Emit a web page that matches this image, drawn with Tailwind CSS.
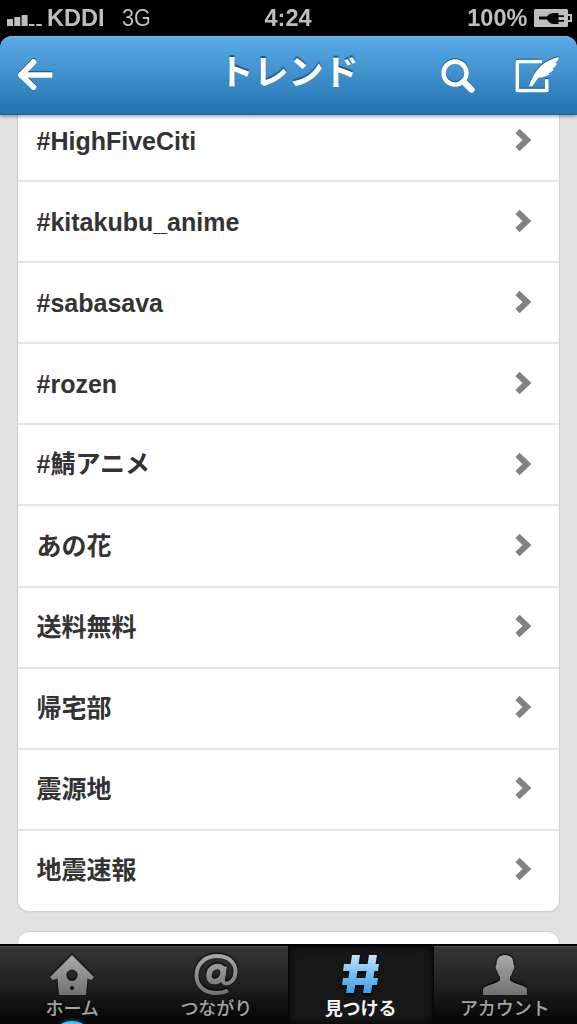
<!DOCTYPE html>
<html lang="ja">
<head>
<meta charset="utf-8">
<title>トレンド</title>
<script src="https://cdn.jsdelivr.net/npm/@tailwindcss/browser@4"></script>
</head>
<body class="bg-black">
<div class="flex h-[1024px] w-[577px] flex-col overflow-hidden bg-black font-['Liberation_Sans','Noto_Sans_CJK_JP',sans-serif]">

  <div class="grid h-9 shrink-0 grid-cols-3 items-center text-[24px] leading-9 text-[#bebebe]">
    <div class="flex items-center pl-[7px]">
      <svg class="h-4 w-[35px]" viewBox="0 0 35 16" fill="#bebebe"><path d="M0 9h6v7H0zM7.300 7h6v9h-6zM14.600 5h6v11h-6zM22 14h5.500v2H22zM29.300 14h5.500v2h-5.500z"/></svg>
      <span class="ml-[5px] w-[58px] font-bold"><span class="inline-block origin-left scale-x-[.98]">KDDI</span></span>
      <span class="ml-[17px] inline-block origin-left scale-x-[.9]">3G</span>
    </div>
    <div class="text-center font-bold"><span class="inline-block scale-x-[.98]">4:24</span></div>
    <div class="flex items-center justify-end pr-[5px]">
      <span class="mr-[7px] inline-block origin-right scale-x-[.98] font-bold">100%</span>
      <svg class="h-[18px] w-[38px]" viewBox="0 0 38 18"><rect width="34" height="18" rx="1.500" fill="#bebebe"/><path d="M34 6h3v6h-3" fill="none" stroke="#bebebe" stroke-width="2"/><path d="M5 7.500h8c2-3 4-3.500 7-3.500h4.500v2.200H30V8h-5.500v3H30v1.800h-5.500V15H20c-3 0-5-1-7-4.500H5z" fill="#080808"/></svg>
    </div>
  </div>

  <header class="z-10 flex h-[79px] shrink-0 items-center rounded-t-[12px] border-b border-[#1f6499] bg-linear-to-b from-[#59ace7] to-[#2373b2] shadow-[0_1px_4px_rgba(0,0,0,.45),inset_0_1px_0_#75b8e9]">
    <div class="w-[144px] pl-[17px]">
      <svg class="h-[36px] w-[38px] drop-shadow-[0_-1px_0_#1d4f78]" viewBox="0 0 38 36" fill="none" stroke="#fff" stroke-width="5.700" stroke-linecap="round" stroke-linejoin="round"><path d="M16.500 5 4 18l12.500 12" /><path d="M5 18h27.500" stroke-linecap="square"/></svg>
    </div>
    <h1 class="flex-1 pb-[5px] text-center text-[35px] leading-[40px] font-bold text-white [text-shadow:0_-2px_1px_#24587f]">トレンド</h1>
    <div class="flex w-[144px] items-center">
      <svg class="h-[40px] w-[44px] drop-shadow-[0_-1px_0_#1d4f78]" viewBox="0 0 44 40" fill="none" stroke="#fff"><circle cx="22" cy="18" r="11.500" stroke-width="4.500"/><path d="m30.500 26.500 8 8" stroke-width="6.500" stroke-linecap="round"/></svg>
      <svg class="ml-[36px] h-[40px] w-[46px] drop-shadow-[0_-1px_0_#1d4f78]" viewBox="0 0 46 40"><path d="M29 6.500H4.300v29h29.500V24" fill="none" stroke="#fff" stroke-width="3.500" stroke-linejoin="round"/><path d="M16 31C19.500 21.500 25 7 45.500 2c0 3-1 4.500-3 6l1.500.5c-1 2.500-2.500 3.500-4.500 5l1.500.5c-1.500 2.500-3.500 3.500-5.500 4.500l1 .7c-3.500 2.500-7 3.300-10.500 3.300-3 2-4 6.500-7.500 9z" fill="#fff"/></svg>
    </div>
  </header>

  <main class="flex min-h-0 flex-1 flex-col gap-[21px] overflow-hidden bg-[#e2e2e2] px-[18px]">
    <ul id="trends" class="-mt-[16px] shrink-0 rounded-[11px] bg-white pb-px text-[25px] leading-[37px] font-bold text-[#333] shadow-[0_0_0_1px_#d2d2d2,0_1px_2px_#c4c4c4]"></ul>
    <div class="h-[80px] shrink-0 rounded-[11px] bg-white shadow-[0_0_0_1px_#d2d2d2]"></div>
  </main>

  <nav class="grid h-[80px] shrink-0 grid-cols-4 border-t-2 border-black bg-linear-to-b from-[#373737] via-[#202020] to-[#050505] text-[18px] leading-[24px] font-medium text-[#a3a3a3] shadow-[inset_0_1px_0_#515151]">
    <a class="relative flex flex-col items-center overflow-hidden pt-[7px]">
      <svg class="h-[43px] w-[46px] drop-shadow-[0_-1px_1px_#000]" viewBox="0 0 46 43"><defs><linearGradient id="g" x2="0" y2="1"><stop stop-color="#aaa"/><stop offset="1" stop-color="#717171"/></linearGradient></defs><path fill="url(#g)" fill-rule="evenodd" d="m23 2 22 22-2.500 3-4-1.500L37 42H10L8.500 25.500l-5 1.500L1 24zm0 14.500a5.700 5.700 0 1 0 0 11.400 5.700 5.700 0 0 0 0-11.400zm0 16.500a2 2 0 1 0 0 4 2 2 0 0 0 0-4z"/></svg>
      <span class="mt-px whitespace-nowrap">ホーム</span>
      <i class="absolute -bottom-[9px] h-[12px] w-[24px] rounded-[50%] bg-[#52bdf0] shadow-[0_0_4px_#258cc4]"></i>
    </a>
    <a class="flex flex-col items-center pt-[7px]">
      <svg class="h-[43px] w-[46px] drop-shadow-[0_-1px_1px_#000]" viewBox="0 0 46 43" fill="none" stroke="url(#at)"><defs><linearGradient id="at" x1="0" x2="0" y1="1" y2="42" gradientUnits="userSpaceOnUse"><stop stop-color="#aaa"/><stop offset="1" stop-color="#717171"/></linearGradient></defs><path stroke-width="4" d="M35 37.500C31 39.500 27.500 40 23 40 10.500 40 3.500 32 3.500 22.500 3.500 11 12 3 24 3c11 0 18.500 6 18.500 15.500 0 7-4.500 12-9 12-3 0-4-2-3.500-5l2-12"/><path stroke-width="5.500" d="M30 19.500c0-4-2-6-5.500-6-5 0-8.500 4-8.500 9 0 4 2 6 5.500 6 5 0 8.500-4 8.500-9z"/></svg>
      <span class="mt-px whitespace-nowrap">つながり</span>
    </a>
    <a class="flex flex-col items-center bg-[#171717] pt-[7px] text-[#f4f4f4] shadow-[inset_0_0_9px_#000,-1px_0_0_#050505,1px_0_0_#050505]">
      <svg class="h-[43px] w-[44px] drop-shadow-[0_2px_1px_#000]" viewBox="0 0 44 43"><defs><linearGradient id="b" x2="0" y1="2" y2="41" gradientUnits="userSpaceOnUse"><stop stop-color="#c2e3fa"/><stop offset=".5" stop-color="#75bff2"/><stop offset="1" stop-color="#3d9be5"/></linearGradient></defs><g fill="url(#b)"><path d="M13 2h8l-6 38H7zM30 2h8l-6 38h-8zM5 11h35l-1 7H4zM4 25h35l-1 7H3z"/></g></svg>
      <span class="mt-px whitespace-nowrap font-bold">見つける</span>
    </a>
    <a class="flex flex-col items-center pt-[7px]">
      <svg class="h-[43px] w-[46px] drop-shadow-[0_-1px_1px_#000]" viewBox="0 0 46 43"><path fill="url(#g)" d="M23 2c6 0 8.500 3.500 8.500 9.500 1.500 1 .8 5-.8 6.500-.7 3-1.500 4.500-2.700 6v3c2 4 16 5 17 9v6H1v-6c1-4 15-5 17-9v-3c-1.200-1.500-2-3-2.700-6-1.600-1.500-2.300-5.500-.8-6.500C14.500 5.500 17 2 23 2z"/></svg>
      <span class="mt-px whitespace-nowrap">アカウント</span>
    </a>
  </nav>
</div>
<script>
const topics = ['#HighFiveCiti', '#kitakubu_anime', '#sabasava', '#rozen', '#鯖アニメ', 'あの花', '送料無料', '帰宅部', '震源地', '地震速報'];
document.getElementById('trends').innerHTML = topics.map(t => `
<li class="flex h-[81.1px] items-center justify-between border-t-2 border-[#e5e5e5] pr-[27px] pl-[18.500px] first:border-transparent">
  <span class="${t.charCodeAt(1) < 128 ? 'pt-[2px]' : ''}">${t}</span>
  <svg class="-mt-[2px] h-[24px] w-[18px]" viewBox="0 0 18 24" fill="none" stroke="#828282" stroke-width="6"><path d="m3.500 3 9.500 9-9.500 9"/></svg>
</li>`).join('');
</script>
</body>
</html>
